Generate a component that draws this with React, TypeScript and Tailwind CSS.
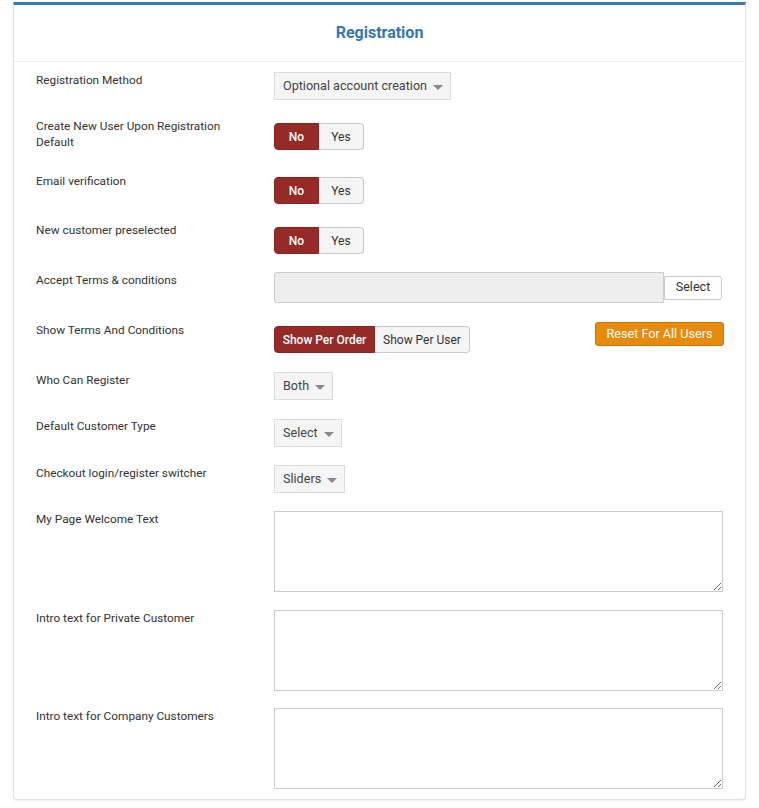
import React from 'react';

const Caret = () => (
  <svg viewBox="0 0 10 5" className="w-[10px] h-[5px] ml-[6px] mt-[2px]">
    <path d="M0 0h10L5 5z" fill="#888" />
  </svg>
);

function SelectBox({ value }: { value: string }) {
  return (
    <div className="h-[28px] inline-flex items-center pl-[8px] pr-[7px] bg-[#f5f5f5] border border-[#dcdcdc] text-[12.6px] text-[#444]">
      {value}
      <Caret />
    </div>
  );
}

function Toggle({ left, right, lw, rw }: { left: string; right: string; lw: number; rw: number }) {
  return (
    <div className="inline-flex text-[12px] leading-none">
      <div
        className="flex items-center justify-center h-[27px] bg-[#962a26] text-white font-medium rounded-l-[4px] border border-[#8a2420]"
        style={{ width: lw }}
      >
        {left}
      </div>
      <div
        className="flex items-center justify-center h-[27px] bg-[#f5f5f5] text-[#333] rounded-r-[4px] border border-l-0 border-[#c8c8c8]"
        style={{ width: rw }}
      >
        {right}
      </div>
    </div>
  );
}

function Row({ label, mt, children }: { label: React.ReactNode; mt: string; children: React.ReactNode }) {
  return (
    <div className={`flex ${mt}`}>
      <div className="w-[238px] shrink-0 text-[11.8px] leading-[16px] text-[#333] pr-4">{label}</div>
      <div className="flex-1 pr-[22px]">{children}</div>
    </div>
  );
}

export default function App() {
  return (
    <div className="min-h-[808px] bg-white pt-[2px] pl-[13px] pr-[13px] font-['Roboto',sans-serif]">
      <div className="w-[733px] border-t-[3px] border-[#337ab7] border-x border-b border-x-[#e2e2e2] border-b-[#e2e2e2] rounded-b-[3px] shadow-[0_1px_2px_rgba(0,0,0,0.06)] pb-[10px]">
        <div className="h-[57px] flex items-center justify-center border-b border-[#eeeeee]">
          <h2 className="text-[16px] font-bold text-[#3377b8] mt-[-1px]">Registration</h2>
        </div>
        <div className="pl-[22px]">
          <Row label="Registration Method" mt="mt-[10px]">
            <SelectBox value="Optional account creation" />
          </Row>
          <Row label={<>Create New User Upon Registration<br />Default</>} mt="mt-[18px]">
            <div className="mt-[5px]">
              <Toggle left="No" right="Yes" lw={45} rw={45} />
            </div>
          </Row>
          <Row label="Email verification" mt="mt-[23px]">
            <div className="mt-[4px]">
              <Toggle left="No" right="Yes" lw={45} rw={45} />
            </div>
          </Row>
          <Row label="New customer preselected" mt="mt-[18px]">
            <div className="mt-[5px]">
              <Toggle left="No" right="Yes" lw={45} rw={45} />
            </div>
          </Row>
          <Row label="Accept Terms & conditions" mt="mt-[18px]">
            <div className="flex items-center">
              <div className="w-[390px] h-[31px] bg-[#eeeeee] border border-[#cccccc] rounded-l-[3px]" />
              <button className="h-[24px] w-[58px] bg-white border border-[#cccccc] rounded-r-[3px] text-[12.6px] text-[#333]">
                Select
              </button>
            </div>
          </Row>
          <Row label="Show Terms And Conditions" mt="mt-[19px]">
            <div className="flex items-start justify-between">
              <div className="mt-[4px]">
                <Toggle left="Show Per Order" right="Show Per User" lw={101} rw={95} />
              </div>
              <button className="h-[24px] w-[129px] bg-[#e88a0c] border border-[#c97500] rounded-[3px] text-[12.6px] text-white mr-[-1px]">
                Reset For All Users
              </button>
            </div>
          </Row>
          <Row label="Who Can Register" mt="mt-[19px]">
            <SelectBox value="Both" />
          </Row>
          <Row label="Default Customer Type" mt="mt-[18px]">
            <div className="mt-[1px]">
              <SelectBox value="Select" />
            </div>
          </Row>
          <Row label="Checkout login/register switcher" mt="mt-[18px]">
            <SelectBox value="Sliders" />
          </Row>
          <Row label="My Page Welcome Text" mt="mt-[18px]">
            <textarea className="block w-[449px] h-[81px] border border-[#cccccc] bg-white" />
          </Row>
          <Row label="Intro text for Private Customer" mt="mt-[18px]">
            <textarea className="block w-[449px] h-[81px] border border-[#cccccc] bg-white" />
          </Row>
          <Row label="Intro text for Company Customers" mt="mt-[17px]">
            <textarea className="block w-[449px] h-[81px] border border-[#cccccc] bg-white" />
          </Row>
        </div>
      </div>
    </div>
  );
}
